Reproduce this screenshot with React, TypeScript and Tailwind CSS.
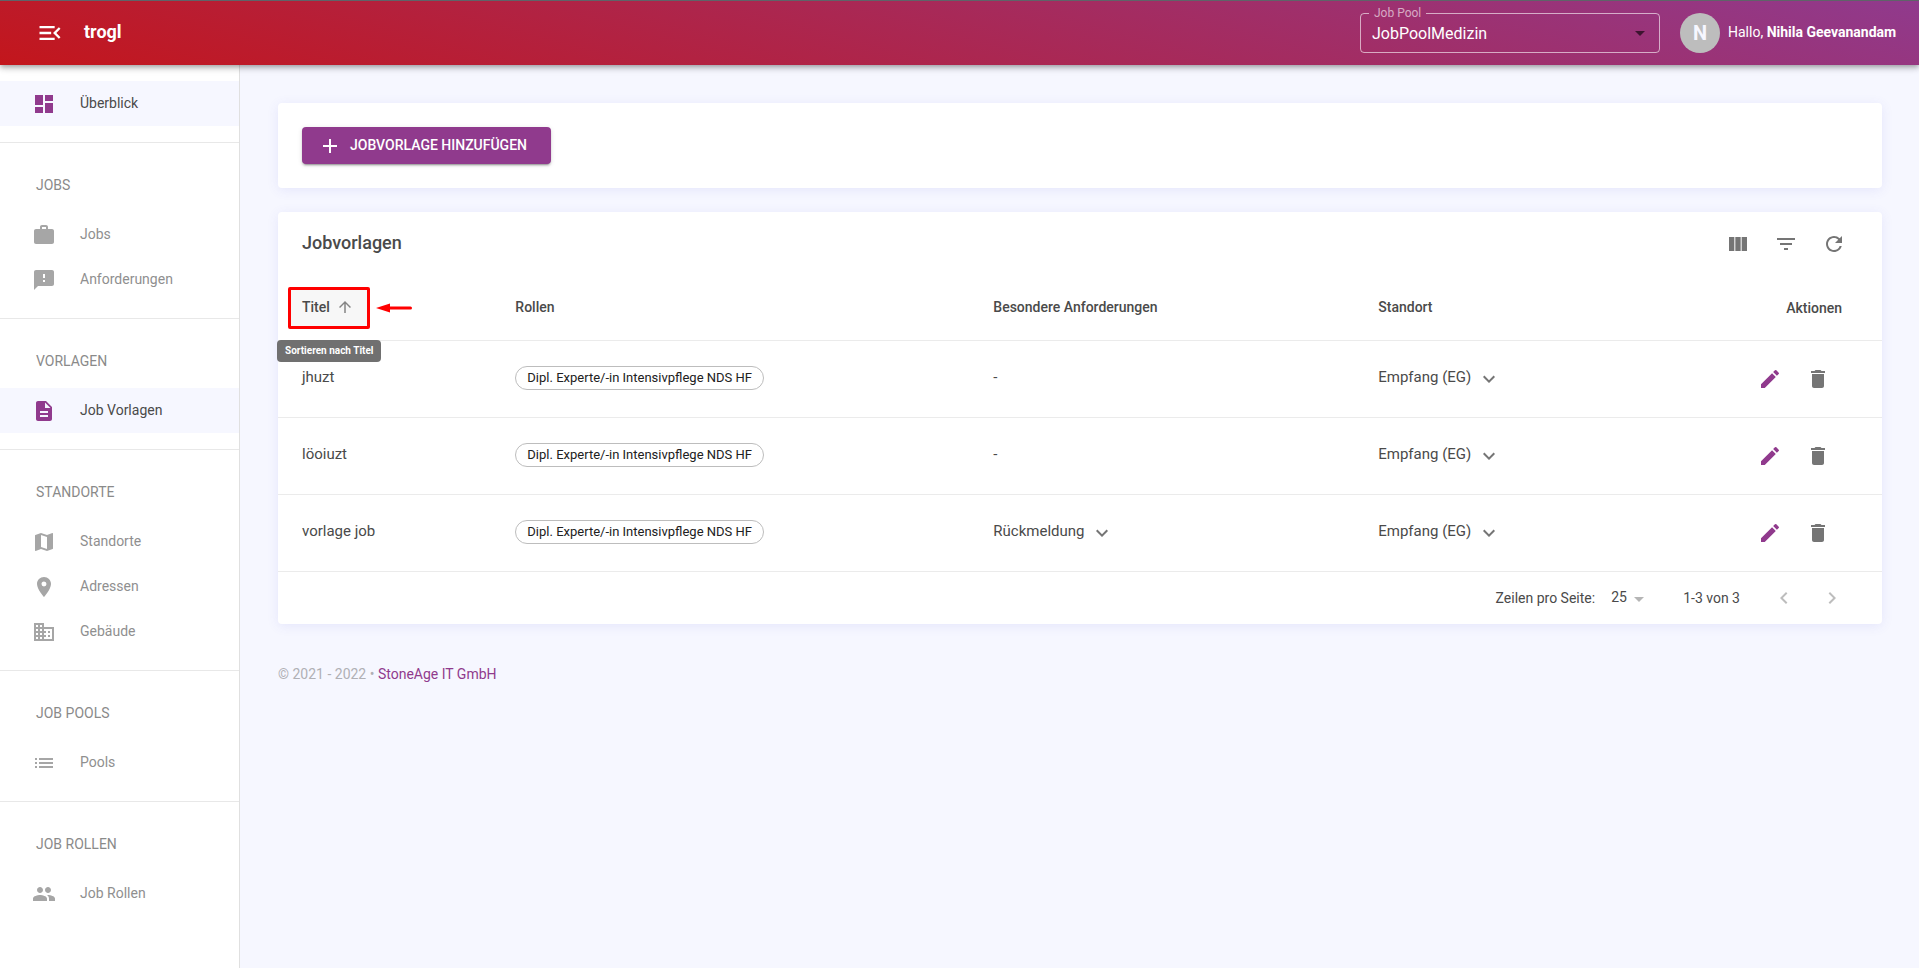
import {
  MdAdd, MdArrowDropDown, MdArrowUpward, MdBusiness, MdChevronLeft, MdChevronRight, MdCreate,
  MdDashboard, MdDelete, MdDescription, MdFeedback, MdFilterList, MdKeyboardArrowDown, MdList,
  MdMap, MdMenuOpen, MdPeople, MdPlace, MdRefresh, MdViewColumn, MdWork,
} from 'react-icons/md';
import type { IconType } from 'react-icons';

type NavItem = { label: string; icon: IconType; active?: boolean };
type NavGroup = { title?: string; items: NavItem[] };

const navGroups: NavGroup[] = [
  { items: [{ label: 'Überblick', icon: MdDashboard, active: true }] },
  { title: 'JOBS', items: [{ label: 'Jobs', icon: MdWork }, { label: 'Anforderungen', icon: MdFeedback }] },
  { title: 'VORLAGEN', items: [{ label: 'Job Vorlagen', icon: MdDescription, active: true }] },
  {
    title: 'STANDORTE',
    items: [
      { label: 'Standorte', icon: MdMap },
      { label: 'Adressen', icon: MdPlace },
      { label: 'Gebäude', icon: MdBusiness },
    ],
  },
  { title: 'JOB POOLS', items: [{ label: 'Pools', icon: MdList }] },
  { title: 'JOB ROLLEN', items: [{ label: 'Job Rollen', icon: MdPeople }] },
];

const rows = [
  { title: 'jhuzt', role: 'Dipl. Experte/-in Intensivpflege NDS HF', requirement: '', location: 'Empfang (EG)' },
  { title: 'löoiuzt', role: 'Dipl. Experte/-in Intensivpflege NDS HF', requirement: '', location: 'Empfang (EG)' },
  { title: 'vorlage job', role: 'Dipl. Experte/-in Intensivpflege NDS HF', requirement: 'Rückmeldung', location: 'Empfang (EG)' },
];

function Header() {
  return (
    <header className="relative z-10 flex h-[65px] items-center border-t border-[#5f6368] bg-[linear-gradient(15deg,#c3161c,#903a8d)] pr-[19px] pl-9 text-white shadow-[0_2px_4px_-1px_rgba(0,0,0,0.2),0_4px_5px_rgba(0,0,0,0.14),0_1px_10px_rgba(0,0,0,0.12)]">
      <button type="button" aria-label="Menü einklappen" className="flex">
        <MdMenuOpen className="size-7" />
      </button>
      <span className="ml-5 pb-0.5 text-lg font-bold">trogl</span>
      <div className="relative ml-auto w-[300px]">
        <fieldset className="pointer-events-none absolute inset-x-0 -top-[6px] bottom-0 rounded border border-white/60 px-2">
          <legend className="px-[5px] text-xs leading-[13px] text-white/60">
            <label htmlFor="job-pool">Job Pool</label>
          </legend>
        </fieldset>
        <select id="job-pool" className="block h-10 w-full appearance-none bg-transparent pt-0.5 pr-8 pl-3 text-base outline-none">
          <option>JobPoolMedizin</option>
        </select>
        <MdArrowDropDown className="pointer-events-none absolute top-2 right-2 size-6 text-black/60" />
      </div>
      <span className="ml-5 flex size-10 items-center justify-center rounded-full bg-[#bdbdbd] text-xl font-bold text-[#f6f7ff]">N</span>
      <p className="ml-2 min-w-[172px] pb-0.5 text-sm">
        Hallo, <b className="font-bold">Nihila Geevanandam</b>
      </p>
    </header>
  );
}

function Sidebar() {
  return (
    <nav className="w-60 shrink-0 border-r border-[#e0e0e0] bg-white text-sm">
      {navGroups.map((group, i) => (
        <section key={i} className="border-b border-[#e8e8e8] py-4 last:border-b-0">
          {group.title && <h2 className="px-9 py-4 leading-[21px] text-[#8a8a8a]">{group.title}</h2>}
          <ul>
            {group.items.map(({ label, icon: Icon, active }) => (
              <li key={label}>
                <a
                  href="#"
                  className={
                    active
                      ? 'flex h-[45px] items-center bg-[#f6f7ff] pl-8 text-[#4a4a4a]'
                      : 'flex h-[45px] items-center pl-8 text-[#8f8f8f]'
                  }
                >
                  <Icon className={active ? 'mt-px size-6 text-[#903a8d]' : 'mt-px size-6 text-[#a6a6a6]'} />
                  <span className="ml-6 pb-0.5">{label}</span>
                </a>
              </li>
            ))}
          </ul>
        </section>
      ))}
    </nav>
  );
}

function Expandable({ label }: { label: string }) {
  return (
    <button type="button" className="flex items-center gap-1.5">
      {label}
      <MdKeyboardArrowDown className="mt-0.5 size-6 text-[#757575]" />
    </button>
  );
}

function SortHeader() {
  return (
    <div className="relative -ml-3.5 inline-flex">
      <button type="button" className="flex h-[42px] w-[82px] items-center gap-1.5 rounded-xs border-3 border-[#ff0000] bg-[#f7f7f7] pb-0.5 pl-[11px] font-medium">
        Titel
        <MdArrowUpward className="size-[18px] text-[#858585]" />
      </button>
      <svg className="absolute top-4 left-[88px] h-2.5 w-9" viewBox="0 0 36 10" aria-hidden="true">
        <path d="M0 5 14 0.5V3.5H34.5a1.5 1.5 0 0 1 0 3H14V9.5Z" fill="#ff0000" />
      </svg>
      <div role="tooltip" className="absolute top-[53px] -left-[11px] rounded bg-[#707070] px-2 py-1 text-[10px] leading-[14px] font-bold whitespace-nowrap text-white">
        Sortieren nach Titel
      </div>
    </div>
  );
}

const card = 'rounded bg-white shadow-[0_2px_12px_rgba(80,80,220,0.1)]';

function TemplatesTable() {
  return (
    <section className={card}>
      <div className="flex h-16 items-center px-6">
        <h1 className="pb-0.5 text-lg font-medium">Jobvorlagen</h1>
        <div className="ml-auto flex gap-6 pr-3 text-[#757575]">
          <button type="button" aria-label="Spalten anzeigen"><MdViewColumn className="size-6" /></button>
          <button type="button" aria-label="Filtern"><MdFilterList className="size-6" /></button>
          <button type="button" aria-label="Aktualisieren"><MdRefresh className="size-6" /></button>
        </div>
      </div>
      <table className="w-full table-fixed text-left text-[15px]">
        <colgroup>
          <col className="w-[13.3%]" />
          <col className="w-[29.8%]" />
          <col className="w-[24%]" />
          <col />
          <col className="w-[160px]" />
        </colgroup>
        <thead>
          <tr className="h-16 border-b border-[#ebebeb] text-sm">
            <th className="pl-6 font-medium"><SortHeader /></th>
            <th className="pb-0.5 pl-6 font-medium">Rollen</th>
            <th className="pb-0.5 pl-6 font-medium">Besondere Anforderungen</th>
            <th className="pb-0.5 pl-6 font-medium">Standort</th>
            <th className="pr-10 text-right font-medium">Aktionen</th>
          </tr>
        </thead>
        <tbody>
          {rows.map((row) => (
            <tr key={row.title} className="h-[77px] border-b border-[#ebebeb]">
              <td className="pb-0.5 pl-6">{row.title}</td>
              <td className="pb-0.5 pl-6">
                <span className="inline-flex h-6 items-center rounded-full border border-[#bdbdbd] px-[11px] text-[13px] text-[#212121]">{row.role}</span>
              </td>
              <td className="pb-0.5 pl-6">{row.requirement ? <Expandable label={row.requirement} /> : '-'}</td>
              <td className="pb-0.5 pl-6"><Expandable label={row.location} /></td>
              <td className="pr-13">
                <div className="flex justify-end gap-6 text-[#757575]">
                  <button type="button" aria-label={`${row.title} bearbeiten`} className="text-[#903a8d]"><MdCreate className="size-6" /></button>
                  <button type="button" aria-label={`${row.title} löschen`}><MdDelete className="size-6" /></button>
                </div>
              </td>
            </tr>
          ))}
        </tbody>
      </table>
      <div className="flex h-[52px] items-center justify-end pr-[38px] text-sm">
        <label htmlFor="page-size">Zeilen pro Seite:</label>
        <div className="relative ml-4">
          <select id="page-size" defaultValue="25" className="block w-9 appearance-none bg-transparent pb-0.5 outline-none">
            <option>25</option>
            <option>50</option>
          </select>
          <MdArrowDropDown className="pointer-events-none absolute top-0 -right-1 size-6 text-[#b5b5b5]" />
        </div>
        <span className="ml-9">1-3 von 3</span>
        <div className="ml-8 flex gap-6 text-[#bdbdbd]">
          <button type="button" aria-label="Vorherige Seite"><MdChevronLeft className="size-6" /></button>
          <button type="button" aria-label="Nächste Seite"><MdChevronRight className="size-6" /></button>
        </div>
      </div>
    </section>
  );
}

export default function App() {
  return (
    <div className="flex min-h-screen flex-col bg-[#f6f7ff] font-[Roboto,sans-serif] text-[#4a4a4a]">
      <Header />
      <div className="flex grow">
        <Sidebar />
        <main className="flex min-w-0 grow flex-col gap-6 pt-[38px] pr-[37px] pl-[38px]">
          <section className={card}>
            <div className="p-6">
              <button type="button" className="flex h-[37px] items-center gap-2 rounded bg-[#903a8d] pr-6 pl-4 text-sm font-medium text-white shadow-[0_3px_1px_-2px_rgba(0,0,0,0.2),0_2px_2px_rgba(0,0,0,0.14),0_1px_5px_rgba(0,0,0,0.12)]">
                <MdAdd className="size-6" />
                <span className="pb-0.5">JOBVORLAGE HINZUFÜGEN</span>
              </button>
            </div>
          </section>
          <TemplatesTable />
          <footer className="pt-4 text-sm text-[#b0b0b5]">
            © 2021 - 2022 • <a href="#" className="text-[#903a8d]">StoneAge IT GmbH</a>
          </footer>
        </main>
      </div>
    </div>
  );
}
